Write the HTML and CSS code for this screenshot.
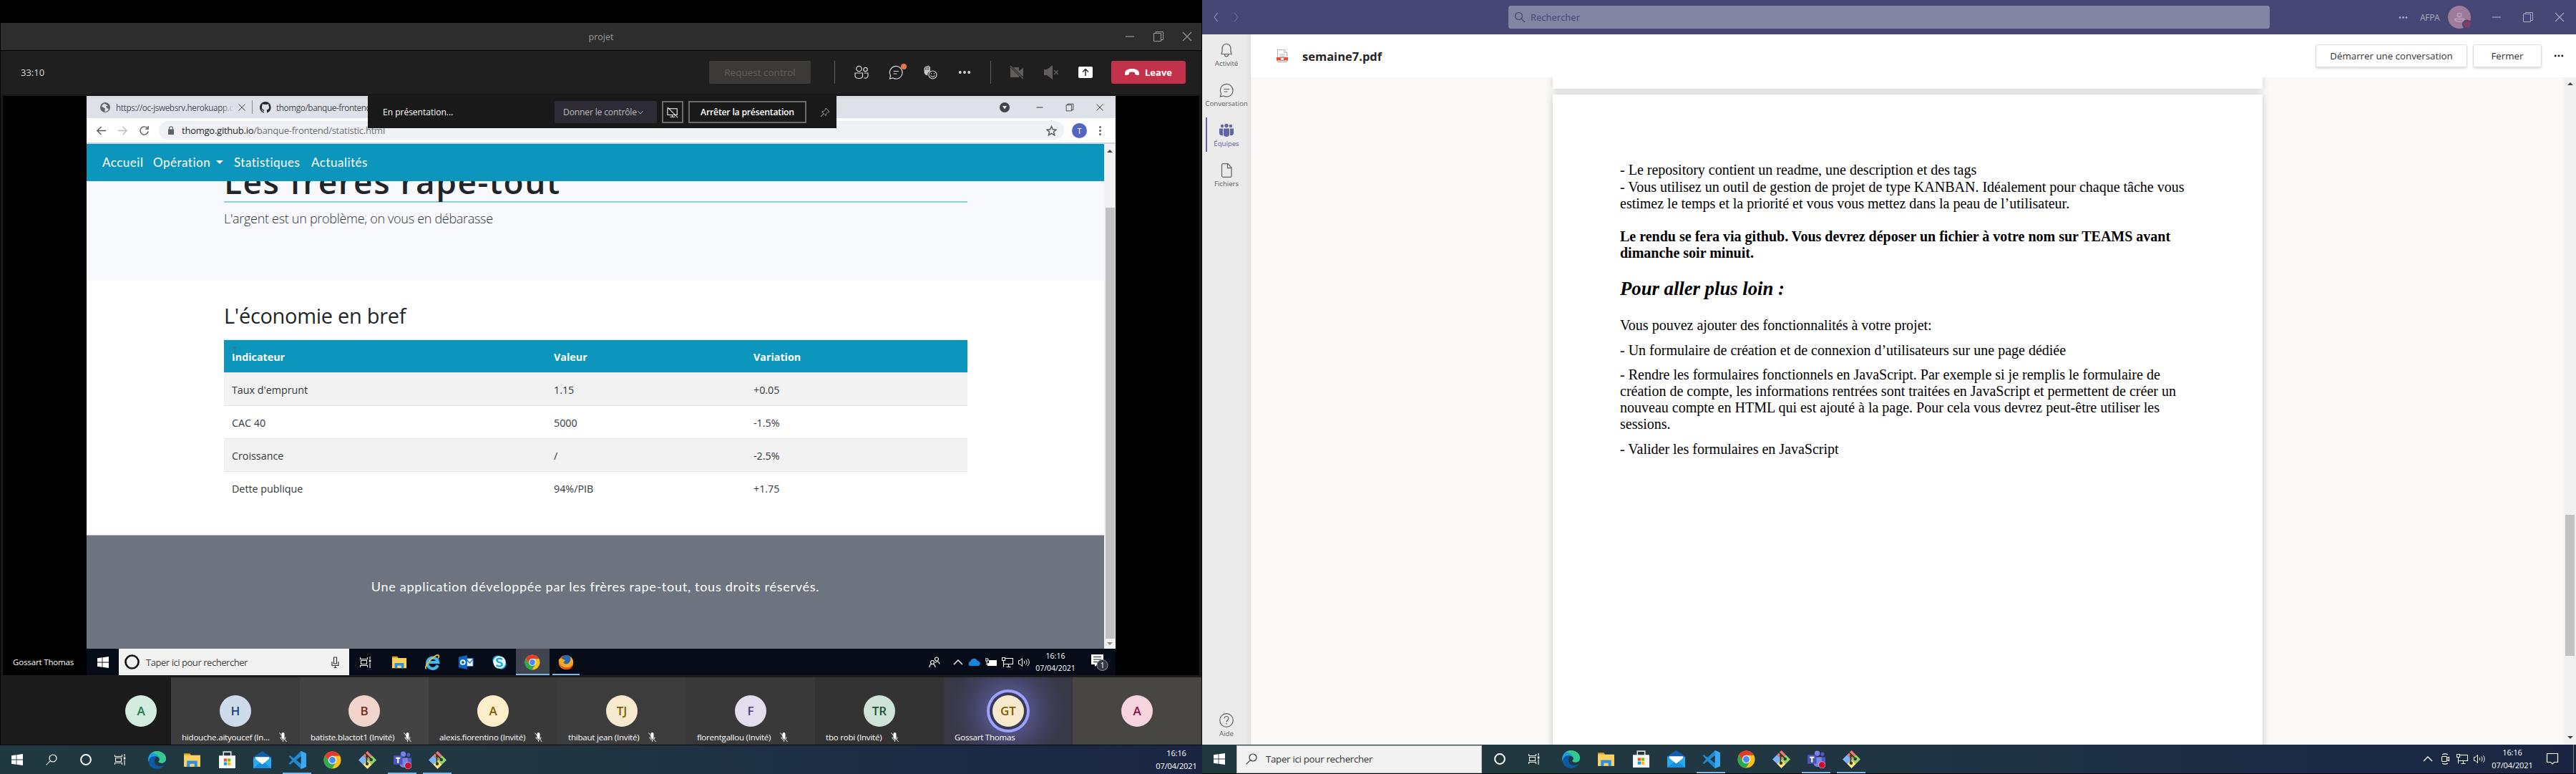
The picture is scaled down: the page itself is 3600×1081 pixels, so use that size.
FILE: index.html
```html
<!DOCTYPE html>
<html lang="fr">
<head>
<meta charset="utf-8">
<title>projet</title>
<link rel="stylesheet" href="styles.css">
</head>
<body>
<svg class="defs" xmlns="http://www.w3.org/2000/svg">
  <symbol id="win" viewBox="0 0 16 16"><path fill="#fff" d="M0 2.2 6.6 1.3V7.6H0zM7.4 1.2 16 0v7.6H7.4zM0 8.4h6.6v6.3L0 13.8zM7.4 8.4H16V16l-8.6-1.2z"/></symbol>
  <symbol id="search" viewBox="0 0 16 16"><g fill="none" stroke="currentColor" stroke-width="1.2"><circle cx="10" cy="6" r="5"/><path d="M6.4 9.6.6 15.4"/></g></symbol>
  <symbol id="searchr" viewBox="0 0 16 16"><g fill="none" stroke="currentColor" stroke-width="1.2"><circle cx="6.5" cy="6.5" r="5"/><path d="m10 10 5 5"/></g></symbol>
  <symbol id="ring" viewBox="0 0 16 16"><circle cx="8" cy="8" r="6.9" fill="none" stroke="currentColor" stroke-width="2"/></symbol>
  <symbol id="tview" viewBox="0 0 16 16"><g fill="none" stroke="#fff" stroke-width="1.1"><path d="M.5 1v2.5h10V1M.5 15v-2.500h10V15M1.500 5.500h8v5h-8zM14 0v3.500M14 8.500V16"/></g><path fill="#fff" d="M12.800 4.500h2.500v3h-2.500z"/></symbol>
  <symbol id="edge" viewBox="0 0 24 24"><path fill="#0c59a4" d="M1 13c1-5 6-7 10-5-3 2-4 10 3 12 4 1 7-1 8-2-2 4-6 6-10 6C5 24 0 19 1 13z"/><path fill="#1b9de2" d="M0 12C0 5 5 0 12 0c7 0 12 5 12 10 0 4-3 6-6 6-2 0-5-1-4-2 3-3 0-7-5-7-5 0-8 3-8 8C.5 14 0 13 0 12z"/><path fill="#35c98b" d="M5 2.500C7 .8 9 0 12 0c7 0 12 5 12 10 0 4-3 6-6 6-2 0-5-1-4-2 2-1.500 2-4 .5-6C13 5 9 3 5 2.500z"/></symbol>
  <symbol id="folder" viewBox="0 0 24 24"><path fill="#e8a317" d="M1 3h8l2 3H1z"/><path fill="#fcd263" d="M1 5.500h22V21H1z"/><path fill="#2f8fe0" d="M5 13h14v8h-4v-4H9v4H5z"/></symbol>
  <symbol id="store" viewBox="0 0 24 24"><path fill="none" stroke="#d8dcdf" stroke-width="1.600" d="M7 7V1h10v6"/><path fill="#f7f7f7" d="M1 6h22v17H1z"/><path fill="#f04f22" d="M7.500 10h4v4h-4z"/><path fill="#7fba00" d="M12.500 10h4v4h-4z"/><path fill="#00a4ef" d="M7.500 15h4v4h-4z"/><path fill="#ffb900" d="M12.500 15h4v4h-4z"/></symbol>
  <symbol id="mail" viewBox="0 0 24 24"><path fill="#0f5fb0" d="M0 8 12 0l12 8v5H0z"/><path fill="#fff" d="M2.500 8h19v6L12 18l-9.500-4z"/><path fill="#29a9ee" d="m0 8 12 10L24 8v15H0z"/><path fill="#1590e0" d="m0 23 9-7.500 3 2.500 3-2.500L24 23z"/></symbol>
  <symbol id="vsc" viewBox="0 0 24 24"><path fill="#1f8ad2" d="M17 0 24 3v18l-7 3L7 14.500l-4.500 3.500L.5 17l4.500-5L.5 7l2-1L7 9.500zM17.500 6.500 10.500 12l7 5.500z"/><path fill="#3aa9f2" d="m17 0 7 3v18l-7 3z"/></symbol>
  <symbol id="chrome" viewBox="0 0 24 24"><circle cx="12" cy="12" r="11.500" fill="#fbc116"/><path fill="#e33b2e" d="M2 6.200A11.500 11.500 0 0 1 22 6.500H12L6.500 13z"/><path fill="#2da94f" d="M2 6.200A11.500 11.500 0 0 0 11.500 23.500L16.500 15 12 17l-5-3z"/><circle cx="12" cy="12" r="5.500" fill="#fff"/><circle cx="12" cy="12" r="4.300" fill="#4a8af4"/></symbol>
  <symbol id="git" viewBox="0 0 24 24"><path fill="#f07575" d="m12 0 6 6-6 6-6-6z"/><path fill="#80b3ff" d="m6 6 6 6-6 6-6-6z"/><path fill="#8fd870" d="m18 6 6 6-6 6-6-6z"/><path fill="#ffe680" d="m12 12 6 6-6 6-6-6z"/><g stroke="#32401f" fill="#32401f" stroke-width="1.600"><path d="M11 5v12M9 3l8 8"/><circle cx="11.500" cy="17" r="1.400"/><circle cx="17" cy="11.500" r="1.400"/><circle cx="11.500" cy="7" r="1"/></g></symbol>
  <symbol id="teams" viewBox="0 0 24 24"><circle cx="13" cy="4" r="3.500" fill="#7b83eb"/><circle cx="20" cy="5" r="2.500" fill="#5059c9"/><path fill="#5059c9" d="M15 9h9v7c0 4-5 5-7 3z"/><path fill="#7b83eb" d="M8 9h11v8c0 6-9 7-11 1z"/><path fill="#4b53bc" d="M0 6h12v12H0z"/><path fill="#fff" d="M3 8.500h6v1.700H7V16H5v-5.800H3z"/><circle cx="19.500" cy="19.500" r="4.500" fill="#c50f2e" stroke="#f3d6dc" stroke-width=".6"/></symbol>
  <symbol id="min" viewBox="0 0 16 16"><path d="M2 8h12" stroke="currentColor" stroke-width="1.200"/></symbol>
  <symbol id="rest" viewBox="0 0 16 16"><path fill="none" stroke="currentColor" d="M1.500 3.500h10v11h-10zM4 3.500v-2h10.500v11h-3"/></symbol>
  <symbol id="x" viewBox="0 0 16 16"><path stroke="currentColor" stroke-width="1.100" d="m2 2 12 12M14 2 2 14"/></symbol>
  <symbol id="dots" viewBox="0 0 16 16"><g fill="currentColor"><circle cx="2.500" cy="8" r="1.700"/><circle cx="8" cy="8" r="1.700"/><circle cx="13.500" cy="8" r="1.700"/></g></symbol>
  <symbol id="chat" viewBox="0 0 20 20"><g fill="none" stroke="currentColor" stroke-width="1.200"><path d="M1.500 19 2.500 14.500A8.800 8.800 0 1 1 6 18z"/><path d="M6.500 8.500h7.500M6.500 12h5"/></g></symbol>
  <symbol id="mic" viewBox="0 0 12 14"><path fill="#fff" d="M4 2a2 2 0 0 1 4 0v5a2 2 0 0 1-4 0z"/><path fill="none" stroke="#fff" d="M2.500 6.500c0 5 7 5 7 0M6 10.500V13M1 .500 11 13"/></symbol>
  <symbol id="net" viewBox="0 0 16 16"><path fill="none" stroke="#fff" stroke-width="1.100" d="M5 2.500h10.500v8H3M9.500 10.500v4M6.500 14.500h6M.500 1.500h4v4h-4zM2.500 5.500v9"/></symbol>
  <symbol id="vol" viewBox="0 0 16 16"><path fill="none" stroke="#fff" d="M.500 5.500h2l3-3v11l-3-3h-2zM8 6c1 1 1 3 0 4M10.500 4.500c2 2 2 5 0 7M13 3c3 3 3 7 0 10"/></symbol>
  <symbol id="up" viewBox="0 0 16 16"><path fill="none" stroke="#fff" stroke-width="1.400" d="m2 11 6-6 6 6"/></symbol>
</svg>
<div class="desktop">
<section class="screen left">
  <div class="titlebar"><span></span><span class="wtitle">projet</span><span class="wctl"><svg><use href="#min"/></svg><svg><use href="#rest"/></svg><svg><use href="#x"/></svg></span></div>
  <div class="callbar">
    <span class="timer">33:10</span>
    <span class="reqctl">Request control</span>
    <i class="sep s1"></i>
    <span class="cell"><svg viewBox="0 0 20 20"><g fill="none" stroke="currentColor" stroke-width="1.200"><circle cx="6.500" cy="5" r="3.700"/><circle cx="15.500" cy="6" r="2.700"/><path d="M1 11h10.500v4.500c0 4-10.500 4-10.500 0zM13.500 11H19v4c0 2.500-3 4-5.500 2.500"/></g></svg></span>
    <span class="cell badge"><svg><use href="#chat"/></svg></span>
    <span class="cell"><svg viewBox="0 0 20 20"><path fill="#c8c6c4" d="M1.500 9V4.500L3 2l5-1.500L10 3v5.500c-3 1-4 3-3.500 6C3 14 1.500 12 1.500 9z"/><path stroke="#1f1f1f" stroke-width=".7" d="M3.700 2.500V7M5.800 1.500V7M7.900 1.500V7"/><g fill="#1f1f1f" stroke="currentColor" stroke-width="1.200"><circle cx="13.500" cy="13.500" r="5.500"/><path d="M10.500 14.500c1.500 2.500 4.500 2.500 6 0M11.500 11v1.500M15.500 11v1.500"/></g></svg></span>
    <span class="cell"><svg class="dotsvg"><use href="#dots"/></svg></span>
    <i class="sep s2"></i>
    <span class="cell dim"><svg viewBox="0 0 20 20"><path fill="currentColor" d="M1 3h12v5l6-4v12l-6-4v5H1z"/><path stroke="#1f1f1f" stroke-width="3" d="m1 1 18 18"/><path stroke="currentColor" stroke-width="1.200" d="m1 1 18 18"/></svg></span>
    <span class="cell dim"><svg viewBox="0 0 20 20"><path fill="currentColor" d="M0 6h4l8-6v20l-8-6H0z"/><path stroke="currentColor" stroke-width="1.500" d="m14 7 6 6m0-6-6 6"/></svg></span>
    <span class="cell"><svg viewBox="0 0 20 20"><rect y="2" width="20" height="16" rx="2" fill="#fff"/><path fill="none" stroke="#1f1f1f" stroke-width="1.400" d="M10 15V5.500M6 9.500l4-4 4 4"/></svg></span>
    <span class="leave"><svg viewBox="0 0 20 10"><path fill="#fff" d="M0 7C0 2 4 0 10 0s10 2 10 7c0 2-.5 2-2 2l-3-.8c-1-.2-1-1-1-3-2-1-6-1-8 0 0 2 0 2.800-1 3L2 9C.5 9 0 9 0 7z"/></svg>Leave</span>
  </div>
  <div class="stage">
    <div class="who">Gossart Thomas</div>
    <div class="shared">
      <div class="tabs">
        <svg class="globe" viewBox="0 0 14 14"><circle cx="7" cy="7" r="7" fill="#5f6368"/><path fill="#dee1e8" d="M6 1.500c-2 1-3 2-4 4l3 2 2 1-1 4c3 1 5-1 6-3l-3-2-1-2 3-1z"/></svg>
        <span class="tab1">https://oc-jswebsrv.herokuapp.co</span><svg class="tabx"><use href="#x"/></svg><i></i>
        <svg class="gh" viewBox="0 0 16 16"><path fill="#24292e" d="M8 0C3.600 0 0 3.600 0 8c0 3.500 2.300 6.500 5.500 7.600.4.100.5-.2.500-.400v-1.500c-2.200.500-2.700-1-2.700-1-.4-.9-.9-1.200-.9-1.200-.7-.5.1-.5.1-.5.800.1 1.200.8 1.200.8.700 1.300 1.900.9 2.300.7.100-.5.300-.9.500-1.100-1.800-.2-3.600-.9-3.600-4 0-.9.300-1.600.8-2.100-.1-.2-.4-1 .1-2.100 0 0 .7-.2 2.200.8a7.600 7.600 0 0 1 4 0c1.500-1 2.200-.8 2.200-.8.400 1.100.2 1.900.1 2.100.5.600.8 1.300.8 2.100 0 3.100-1.900 3.700-3.700 3.900.3.300.6.800.6 1.500v2.200c0 .2.100.5.500.4A8 8 0 0 0 8 0z"/></svg>
        <span class="tab2">thomgo/banque-frontend</span>
        <span class="bctl"><svg class="dd" viewBox="0 0 14 14"><circle cx="7" cy="7" r="7" fill="#41444a"/><path fill="#fff" d="M4 5h6l-3 4.500z"/></svg><svg><use href="#min"/></svg><svg><use href="#rest"/></svg><svg><use href="#x"/></svg></span>
      </div>
      <div class="address">
        <svg viewBox="0 0 16 16"><path d="M15 8H2m6-6L2 8l6 6"/></svg><svg class="off" viewBox="0 0 16 16"><path d="M1 8h13M8 2l6 6-6 6"/></svg><svg viewBox="0 0 16 16"><path d="M13 4.500A6 6 0 1 0 14 9M14 1v4.500H9.500"/></svg>
        <div class="url"><svg viewBox="0 0 10 12"><path fill="#5f6368" stroke="none" d="M1 4.500h8V12H1z"/><path stroke="#5f6368" fill="none" stroke-width="1.300" d="M2.700 5V2.800c0-2.700 4.600-2.700 4.600 0V5"/></svg><b>thomgo.github.io</b><span>/banque-frontend/statistic.html</span><svg class="star" viewBox="0 0 16 16"><path d="m8 1.500 2 4.700 5 .4-3.800 3.200 1.200 5L8 12.100l-4.400 2.700 1.200-5L1 6.600l5-.4z"/></svg></div>
        <span class="acct">T</span><span class="kebab"><i></i><i></i><i></i></span>
      </div>
      <div class="page">
        <div class="site">
          <nav><a class="n1">Accueil</a><a class="n2">Opération</a><i></i><a class="n3">Statistiques</a><a class="n4">Actualités</a></nav>
          <header><div class="hero"><h1>Les frères rape-tout</h1></div><p>L'argent est un problème, on vous en débarasse</p></header>
          <main><h2>L'économie en bref</h2>
          <table><tr><th>Indicateur<svg class="ibeam" viewBox="0 0 6 14"><path fill="none" stroke="#5b6a70" d="M.5.5h5M3 .5v13"/></svg></th><th>Valeur</th><th>Variation</th></tr>
          <tr class="odd"><td>Taux d'emprunt</td><td>1.15</td><td>+0.05</td></tr>
          <tr><td>CAC 40</td><td>5000</td><td>-1.5%</td></tr>
          <tr class="odd"><td>Croissance</td><td>/</td><td>-2.5%</td></tr>
          <tr><td>Dette publique</td><td>94%/PIB</td><td>+1.75</td></tr></table></main>
          <footer><span>Une application développée par les frères rape-tout, tous droits réservés.</span></footer>
        </div>
        <div class="sbar"><i class="au"></i><b></b><i class="ad"></i></div>
      </div>
      <div class="rtask">
        <span class="rwin"><svg><use href="#win"/></svg></span>
        <div class="rsearch"><svg class="rr"><use href="#ring"/></svg><span>Taper ici pour rechercher</span><svg class="rmic" viewBox="0 0 12 16"><path fill="none" stroke="#333" stroke-width="1.200" d="M4 1h4v9H4zM1.500 7v5.500h9V7M6 12.500V16M4 15.500h4"/></svg></div>
        <span class="rc"><svg class="s16"><use href="#tview"/></svg></span><span class="rc"><svg><use href="#folder"/></svg></span>
        <span class="rc"><svg viewBox="0 0 24 24"><path fill="none" stroke="#45b8f2" stroke-width="4.500" d="M20.500 16.500A8.300 8.300 0 1 1 21 12H7"/><path fill="none" stroke="#f7c52c" stroke-width="1.800" d="M3 22C-3 19 19-4 22 2c.5 1 0 2.500-1 4"/></svg></span>
        <span class="rc"><svg viewBox="0 0 24 24"><path fill="#fff" stroke="#0f6fd0" d="M12 6h11v12H12z"/><path fill="none" stroke="#0f6fd0" stroke-width="1.500" d="m13 8 5 5 5-6"/><path fill="#0b65c4" d="m1 4 13-3v22L1 20z"/><circle cx="7.500" cy="12" r="3.200" fill="none" stroke="#fff" stroke-width="2"/></svg></span>
        <span class="rc"><svg viewBox="0 0 24 24"><circle cx="9" cy="9" r="7.500" fill="#13a9ec"/><circle cx="15" cy="15" r="7.500" fill="#13a9ec"/><circle cx="12" cy="12" r="9.500" fill="#e9f8ff"/><path fill="none" stroke="#12a5ea" stroke-width="2.500" d="M16 8c-2-3-8-2-8 1 0 4 8 2 8 6 0 4-7 4-8.500 1"/></svg></span>
        <span class="rc hot"><svg><use href="#chrome"/></svg></span>
        <span class="rc warm"><svg viewBox="0 0 24 24"><circle cx="12" cy="12" r="11" fill="#ef6b19"/><circle cx="13" cy="9" r="8" fill="#2169b4"/><path fill="#f7a928" d="M1 8c2-3 4-2 6-1l4 2-3 3c2 4 7 3 9 0 3-3 2-7 1-9 4 3 5 6 5 9-1 9-9 12-15 10C2 20 0 14 1 8z"/><path fill="#e4501a" d="M1 9c1 7 5 11 12 11 4 0 8-2 10-6 0 13-22 13-22-5z"/></svg></span>
        <div class="rtray"><svg viewBox="0 0 16 16"><g fill="none" stroke="#fff" stroke-width="1.200"><circle cx="11" cy="3.500" r="2.500"/><circle cx="5" cy="8" r="2.500"/><path d="M1 15c0-6 8-6 8 0M9 8.500c3-3 6-1 6 2"/></g></svg><svg class="c2"><use href="#up"/></svg><svg viewBox="0 0 16 12"><path fill="#1785e0" d="M2 11a3 3 0 0 1 0-6c1-5 8-6 10-1 4 0 5 5 2 7z"/></svg><svg viewBox="0 0 16 16"><path fill="#fff" d="M5 5h11v8H3V9h2z"/><path stroke="#fff" fill="none" d="M0 3h4v3H0zM2 6v6"/></svg><svg><use href="#net"/></svg><svg><use href="#vol"/></svg></div>
        <div class="rclock">16:16<br>07/04/2021</div>
        <svg class="rnote" viewBox="0 0 24 24"><path fill="#fff" d="M0 1h17v14H9l-4 3v-3H0z"/><path stroke="#222" d="M3 4.500h11M3 8h11M3 11.500h7"/><circle cx="15.500" cy="16" r="7.500" fill="#343942" stroke="#8c9097"/><text x="12.500" y="20" fill="#fff" font-size="11">1</text></svg>
      </div>
    </div>
  </div>
  <div class="people">
    <div class="p me"><span class="av g">A</span></div>
    <div class="p t1"><span class="av b">H</span><label>hidouche.aityoucef (In...<svg><use href="#mic"/></svg></label></div>
    <div class="p t2"><span class="av r">B</span><label>batiste.blactot1 (Invité)<svg><use href="#mic"/></svg></label></div>
    <div class="p t3"><span class="av y">A</span><label>alexis.fiorentino (Invité)<svg><use href="#mic"/></svg></label></div>
    <div class="p t4"><span class="av y2">TJ</span><label>thibaut jean (Invité)<svg><use href="#mic"/></svg></label></div>
    <div class="p t3"><span class="av v">F</span><label>florentgallou (Invité)<svg><use href="#mic"/></svg></label></div>
    <div class="p t5"><span class="av g2">TR</span><label>tbo robi (Invité)<svg><use href="#mic"/></svg></label></div>
    <div class="p speak"><span class="av y2">GT</span><label>Gossart Thomas</label></div>
    <div class="p t6"><span class="av pk">A</span></div>
  </div>
  <div class="taskbar">
    <span class="k"><svg class="s16"><use href="#win"/></svg></span><span class="k"><svg class="s16"><use href="#search"/></svg></span><span class="k"><svg class="s16"><use href="#ring"/></svg></span><span class="k tv"><svg class="s16"><use href="#tview"/></svg></span>
    <span class="a"><svg><use href="#edge"/></svg></span><span class="a"><svg><use href="#folder"/></svg></span><span class="a"><svg><use href="#store"/></svg></span><span class="a"><svg><use href="#mail"/></svg></span><span class="a on"><svg><use href="#vsc"/></svg></span><span class="a"><svg><use href="#chrome"/></svg></span><span class="a"><svg><use href="#git"/></svg></span><span class="a on"><svg><use href="#teams"/></svg></span><span class="a on"><svg><use href="#git"/></svg></span>
    <div class="clock">16:16<br>07/04/2021</div>
  </div>
</section>
<section class="screen right">
  <div class="thead">
    <svg class="nv" viewBox="0 0 8 14"><path fill="none" stroke="currentColor" d="M6.500 1 2 7l4.500 6"/></svg><svg class="nv nv2" viewBox="0 0 8 14"><path fill="none" stroke="currentColor" d="M1.500 1 6 7l-4.500 6"/></svg>
    <div class="tsearch"><svg><use href="#searchr"/></svg>Rechercher</div>
    <div class="tuser"><svg class="td"><use href="#dots"/></svg><span>AFPA</span>
    <svg class="tav" viewBox="0 0 32 32"><circle cx="16" cy="16" r="16" fill="#9c7c98"/><g fill="none" stroke="#bba5bd" stroke-width="1.300"><circle cx="16" cy="13" r="2.700"/><path d="M9.500 18.500h13c0 5-13 5-13 0z"/></g><circle cx="26.500" cy="26" r="6.500" fill="#464775"/><circle cx="27" cy="26" r="5" fill="#843c68"/></svg></div>
    <div class="tctl"><svg><use href="#min"/></svg><svg><use href="#rest"/></svg><svg><use href="#x"/></svg></div>
  </div>
  <div class="tbody">
    <aside>
      <div class="it"><svg viewBox="0 0 20 20"><path fill="none" stroke="currentColor" stroke-width="1.200" d="M3 15.500c0-1.500 1-2 1-4V8c0-9 12-9 12 0v3.500c0 2 1 2.500 1 4zM7.500 16c0 4 5 4 5 0"/></svg>Activité</div>
      <div class="it"><svg><use href="#chat"/></svg>Conversation</div>
      <div class="it act"><svg viewBox="0 0 20 20"><g fill="currentColor"><circle cx="10" cy="3.500" r="2.700"/><circle cx="4" cy="4" r="2.200"/><circle cx="16" cy="4" r="2.200"/><path d="M6 7.500h8V16c0 4-8 4-8 0zM0 7.500h5V17c-3 1-5-1-5-3zM20 7.500h-5V17c3 1 5-1 5-3z"/></g></svg>Équipes</div>
      <div class="it"><svg viewBox="0 0 20 20"><path fill="none" stroke="currentColor" stroke-width="1.200" d="M5 .6h7l5 5.400v11.500c0 1-.5 1.900-1.500 1.900h-10c-1 0-2-.9-2-1.900v-15C3.500 1.500 4 .6 5 .6zM11.500.6v6H17"/></svg>Fichiers</div>
      <div class="it help"><svg viewBox="0 0 20 20"><g fill="none" stroke="currentColor" stroke-width="1.200"><circle cx="10" cy="10" r="9.300"/><path d="M7 7.500c0-4 6-4 6 0 0 2-3 2.500-3 5M10 14v1.500"/></g></svg>Aide</div>
    </aside>
    <div class="file">
      <div class="fhead"><svg class="pdf" viewBox="0 0 16 18"><path fill="#fff" stroke="#b5b5b5" d="M1.500.5h9l4 4v13h-13z"/><path fill="none" stroke="#b5b5b5" d="M10.500.5v4h4M4 7h8M4 9.500h8"/><path fill="#e0563b" d="M0 11h16v4.500H0z"/><path fill="#fff" stroke="#c33" stroke-width=".7" d="M5.500 11.500h5v3.500h-5z"/></svg><strong>semaine7.pdf</strong><span class="btn b1">Démarrer une conversation</span><span class="btn b2">Fermer</span><svg class="fd"><use href="#dots"/></svg></div>
      <div class="viewer">
        <div class="canvas">
          <div class="sheet s0"></div>
          <article class="sheet">
            <p class="l l1">- Le repository contient un readme, une description et des tags</p>
            <p class="l">- Vous utilisez un outil de gestion de projet de type KANBAN. Idéalement pour chaque tâche vous<br>estimez le temps et la priorité et vous vous mettez dans la peau de l’utilisateur.</p>
            <p class="l bold">Le rendu se fera via github. Vous devrez déposer un fichier à votre nom sur TEAMS avant<br>dimanche soir minuit.</p>
            <h3>Pour aller plus loin :</h3>
            <p class="l q">Vous pouvez ajouter des fonctionnalités à votre projet:</p>
            <p class="l q">- Un formulaire de création et de connexion d’utilisateurs sur une page dédiée</p>
            <p class="l q">- Rendre les formulaires fonctionnels en JavaScript. Par exemple si je remplis le formulaire de<br>création de compte, les informations rentrées sont traitées en JavaScript et permettent de créer un<br>nouveau compte en HTML qui est ajouté à la page. Pour cela vous devrez peut-être utiliser les<br>sessions.</p>
            <p class="l q">- Valider les formulaires en JavaScript</p>
          </article>
        </div>
        <div class="vbar"><i class="au"></i><b></b><i class="ad"></i></div>
      </div>
    </div>
  </div>
  <div class="taskbar">
    <span class="k"><svg class="s16"><use href="#win"/></svg></span>
    <div class="lsearch"><svg class="s16"><use href="#search"/></svg>Taper ici pour rechercher</div>
    <span class="k"><svg class="s16"><use href="#ring"/></svg></span><span class="k tv"><svg class="s16"><use href="#tview"/></svg></span>
    <span class="a"><svg><use href="#edge"/></svg></span><span class="a"><svg><use href="#folder"/></svg></span><span class="a"><svg><use href="#store"/></svg></span><span class="a"><svg><use href="#mail"/></svg></span><span class="a on"><svg><use href="#vsc"/></svg></span><span class="a"><svg><use href="#chrome"/></svg></span><span class="a"><svg><use href="#git"/></svg></span><span class="a on"><svg><use href="#teams"/></svg></span><span class="a on"><svg><use href="#git"/></svg></span>
    <div class="ltray"><svg class="c2"><use href="#up"/></svg><svg viewBox="0 0 16 16"><g fill="none" stroke="#fff" stroke-width="1.100"><rect x="3.500" y="4.500" width="7" height="7" rx="1"/><path d="m10.500 7 3-1.500v5l-3-1.500M4 2c2-1.500 6-1.500 8 0M4 14c2 1.500 6 1.500 8 0"/></g></svg><svg><use href="#net"/></svg><svg><use href="#vol"/></svg></div>
    <div class="clock">16:16<br>07/04/2021</div>
    <svg class="note" viewBox="0 0 18 18"><path fill="none" stroke="#fff" stroke-width="1.200" d="M1.500 1.500h15v12h-5L9 16l-2.500-2.500h-5z"/></svg><i class="peek"></i>
  </div>
</section>
<div class="present"><span class="pt">En présentation...</span><span class="give">Donner le contrôle<svg viewBox="0 0 8 6"><path fill="none" stroke="#aaa" d="m.5 1 3.500 4 3.500-4"/></svg></span><span class="noscr"><svg viewBox="0 0 18 18"><path fill="none" stroke="#fff" stroke-width="1.200" d="M1 3h15v10H1zM1 1l16 16M5 16h8M8.500 13v3"/></svg></span><span class="stop">Arrêter la présentation</span><svg class="pin" viewBox="0 0 14 14"><path fill="none" stroke="#999" d="m8 1 5 5-2 .5-2.500 2.500L8 11.500 2.500 6 5 5.500 7.500 3zM5 9l-4 4"/></svg></div>
</div>
</body>
</html>
```
FILE: styles.css
```css
*{box-sizing:border-box}
body{margin:0;background:#000;font-family:"Open Sans","Noto Sans",sans-serif;overflow:hidden}
svg{display:block;flex:none;width:16px;height:16px}
.defs{position:absolute;width:0;height:0}
p,h1,h2,h3{margin:0}
.desktop{display:flex;width:3600px;height:1081px;position:relative}
.screen{display:flex;flex-direction:column;height:1081px}
.left{width:1680px;padding-top:32px}
.right{width:1920px}

.titlebar{margin:0 1px;height:38px;background:#2d2d2d;display:grid;grid-template-columns:1fr auto 1fr;align-items:center;color:#9a9a9a;font-size:12.500px}
.wctl{justify-self:end;display:flex;gap:24px;padding-right:12px}
.callbar{margin:1px 1px 0;height:63px;background:#1f1f1f;border-bottom:3px solid #191919;display:flex;align-items:center;color:#d8d8d8}
.timer{font-size:13px;width:962px;padding-left:28px}
.reqctl{width:142px;height:32px;margin-left:28px;background:#3b3a39;border-radius:2px;color:#615f5e;font-size:13.500px;line-height:32px;text-align:center}
.sep{width:1px;height:32px;background:#605e5c}
.s1{margin:0 13px 0 33px}.s2{margin:0 12px}
.cell{width:48px;display:flex;justify-content:center;position:relative}
.cell svg{width:20px;height:20px}
.cell .dotsvg{width:18px}
.badge::after{content:"";position:absolute;left:31px;top:-2px;width:8px;height:8px;border-radius:50%;background:#e97548}
.dim{color:#605e5c}
.leave{margin-left:12px;width:104px;height:32px;background:#c4314b;border-radius:3px;display:flex;align-items:center;justify-content:center;gap:8px;color:#fff;font-size:13px;font-weight:700}
.leave svg{width:20px;height:10px}

.stage{margin-left:1px;height:812px;width:1678px;background:#000;border:solid #1b1b1b;border-width:0 3px 3px;display:flex}
.who{width:117px;padding:782px 0 0 14px;color:#fff;font-size:11.500px;letter-spacing:-.15px;line-height:18px;white-space:nowrap}
.shared{width:1438px;height:809px;display:flex;flex-direction:column;background:#fff}
.tabs{height:31px;background:linear-gradient(#d5d8df,#dee1e8 6px);display:flex;align-items:center;font-size:11.800px;letter-spacing:-.42px;color:#4a4d52}
.globe{width:14px;height:14px;margin-left:19px}
.tab1{width:164px;margin-left:8px;overflow:hidden;white-space:nowrap;-webkit-mask-image:linear-gradient(90deg,#000 90%,transparent)}
.tabx{width:12px;height:12px;margin-left:6px;color:#333}
.tabs>i{width:1px;height:19px;background:#85888d;margin:0 10px 0 8px}
.gh{width:16px;height:16px}
.tab2{margin-left:7px;width:145px;white-space:nowrap;overflow:hidden}
.bctl{margin-left:auto;display:flex;align-items:center;color:#222;padding-right:16px}
.bctl svg{width:12px;height:12px;margin-left:30px}
.bctl .dd{width:14px;height:14px;margin:0 6px 0 0}
.address{height:36px;border-bottom:2px solid #cfd6df;background:#fff;display:flex;align-items:center;padding-left:13px}
.address svg{width:15px;height:15px;margin-right:15px;fill:none;stroke:#54575c;stroke-width:1.500}
.address .off{stroke:#b9bbbf}
.url{width:1265px;height:26px;margin-left:-2px;border-radius:13px;background:#f0f1f5;display:flex;align-items:center;padding:0 10px 0 12px;font-size:13px;letter-spacing:-.24px;color:#6c6f74}
.url b{font-weight:400;color:#25272a}
.url svg{width:10px;height:12px;margin-right:10px}
.url .star{width:15px;height:15px;margin:0 0 0 auto}
.acct{width:21px;height:21px;border-radius:50%;background:#5366c2;color:#fff;font-size:11px;line-height:21px;text-align:center;margin-left:11px}
.kebab{margin-left:17px;display:flex;flex-direction:column;gap:2px}
.kebab i{width:3px;height:3px;border-radius:50%;background:#5f6368}
.page{display:flex;height:705px}
.site{width:1422px;display:flex;flex-direction:column}
nav{height:52px;background:#0d96bd;color:#fff;font:17px Lato,sans-serif;letter-spacing:.5px;display:flex;align-items:center;padding:0 0 2px 22px}
nav a{white-space:nowrap}
.n1{width:71px}.n2{width:88px}.n3{width:108px}
nav i{border:5px solid transparent;border-top-color:#fff;border-bottom:0;margin-right:15px}
header{height:139px;background:#f8f9fd;padding:0 191px 0 192px;overflow:hidden}
.hero{display:flow-root;height:30px;border-bottom:2px solid #8bcfe2}
h1{font:600 46px/58px "Open Sans",sans-serif;letter-spacing:1.550px;color:#212529;margin-top:-29px;white-space:nowrap}
header p{font-size:18px;letter-spacing:-.3px;font-weight:300;line-height:28px;color:#333;margin-top:8px}
main{padding:31px 191px 0 192px;height:355px}
h2{font:500 29px/36px "Open Sans",sans-serif;letter-spacing:-.3px;color:#212529;margin-bottom:15px}
table{width:1039px;border-collapse:collapse;font-size:14.300px;color:#33373b;table-layout:fixed}
th,td{height:46px;padding:2px 0 0 11px;text-align:left;border-top:1px solid #e3e5e8}
th:nth-child(1){width:450px}th:nth-child(2){width:279px}
th{background:#0d96bd;color:#fff;position:relative}
.ibeam{position:absolute;left:12px;top:10px;width:6px;height:14px}
.odd{background:#f2f2f2}
footer{height:159px;background:#6d737f;border-top:1px solid #b9bcc2;color:#fff;font:18px Lato,sans-serif;letter-spacing:.73px;display:flex;justify-content:center;padding-top:60px}
.sbar,.vbar{display:flex;flex-direction:column;align-items:center;background:#f1f1f3}
.sbar{width:16px}
.sbar b{width:13px;height:602px;background:#c1c1c1;margin-top:77px}
.au{border:4px solid transparent;border-bottom-color:#444;border-top:0;margin-top:8px}
.ad{border:4px solid transparent;border-top-color:#8a8a8a;border-bottom:0;margin-top:5px}
.rtask{height:37px;background:#050c18;display:flex;align-items:center;color:#fff}
.rwin{width:45px;padding-left:15px}
.rsearch{width:322px;height:37px;background:#f2f2f2;color:#444;display:flex;align-items:center;font-size:13px;letter-spacing:-.45px;padding:0 13px 0 8px}
.rr{width:21px;height:21px;color:#111;margin-right:9px}
.rmic{width:13px;height:16px;margin-left:auto}
.rc{width:46.600px;height:37px;display:flex;align-items:center;justify-content:center}
.rc svg{width:22px;height:22px}
.rc .s16,.s16{width:16px;height:16px}
.hot{background:#3f444e;box-shadow:inset 0 -2px #76b9ed}
.warm{background:linear-gradient(#76b9ed,#76b9ed) 50% 100%/38px 2px no-repeat}
.rtray{margin-left:auto;display:flex;align-items:center;gap:7px}
.rtray>svg:first-child{margin-right:10px}
.rtray>svg:nth-child(3){height:12px}
.rclock{width:66px;margin-left:3px;font-size:10.500px;line-height:17px;text-align:center}
.rnote{width:24px;height:24px;margin:0 10px 0 17px}

.people{margin:0 1px;height:94px;display:flex;background:#1b1b1b}
.p{width:180px;height:94px;display:flex;flex-direction:column;align-items:center;padding-top:25px}
.me{width:238px;align-items:flex-end;padding-right:20px}
.av{width:44px;height:44px;border-radius:50%;font-size:17px;font-weight:600;text-align:center;line-height:44px;flex:none}
.p label{align-self:flex-start;padding-left:15px;margin-top:6px;color:#fff;font-size:11.500px;letter-spacing:-.2px;line-height:18px;display:flex;gap:12px;align-items:center;white-space:nowrap}
.p label svg{width:13px;height:14px}
.g{background:#d2ecdf;color:#237b4b}.b{background:#cedbeb;color:#1b4370}.r{background:#f1d5cd;color:#76281b}.y{background:#fdeeca;color:#835c00}.y2{background:#f7e9cd;color:#835c00}.v{background:#e2deed;color:#4c3d7a}.g2{background:#cfe2d7;color:#1d5138}.pk{background:#f5d4e0;color:#8a1445}
.t1{background:#3d3d3d}.t2{background:#434343}.t3{background:#393939}.t4{background:#3c3c3c}.t5{background:#333}.t6{background:#474643}
.speak{background:radial-gradient(circle at 50% 50%,#5a5b94 0,#4f4f7c 34px,#424160 52px,#393847 80px)}
.speak .av{box-shadow:0 0 0 4px #39395a,0 0 0 8px #9ea2ff}

.taskbar{height:41px;background:linear-gradient(90deg,#203840 0,#213741 40%,#1b2a44 82%,#1b2542);display:flex;align-items:center;color:#fff;border-top:1px solid #05080a}
.right .taskbar{border-top:0;border-bottom:1px solid #05080a}
.k{width:48px;height:40px;display:flex;align-items:center;justify-content:center}
.tv{margin-right:2.500px}
.a{width:49px;height:40px;display:flex;align-items:center;justify-content:center}
.a svg{width:25px;height:25px}
.on{background:linear-gradient(#76b9ed,#76b9ed) 50% 100%/40px 2px no-repeat}
.clock{width:62px;font-size:11px;letter-spacing:-.1px;line-height:18px;text-align:center}
.left .clock{margin-left:auto;margin-right:5px}

.thead{height:48px;background:#464775;display:flex;align-items:center;color:#a9a9c4}
.nv{width:8px;height:14px;margin-left:15px}.nv2{margin-left:21px;color:#7a7aa3}
.tsearch{width:1064px;height:32px;margin-left:376px;background:#8383a3;border-radius:3px;color:#464775;font-size:13px;display:flex;align-items:center;gap:7px;padding-left:8px}
.tuser{margin-left:180px;display:flex;align-items:center;font-size:12px}
.td{width:13px;height:13px}
.tuser span{margin:0 12px 0 17px;letter-spacing:-.3px}
.tav{width:32px;height:32px}
.tctl{display:flex;gap:28px;margin-left:28px}
.tbody{display:flex;height:992px}
aside{width:68px;background:linear-gradient(90deg,#ebebeb 60px,#dfdfdf);display:flex;flex-direction:column;padding-top:4px}
.it{height:56px;display:flex;flex-direction:column;align-items:center;padding-top:8px;font-size:9.800px;letter-spacing:-.1px;line-height:18px;color:#616161}
.it svg{width:20px;height:20px}
.act{color:#6264a7;background:linear-gradient(#6264a7,#6264a7) 5px 0/2px 48px no-repeat}
.help{margin-top:auto;margin-bottom:-4px}
.file{width:1852px}
.fhead{height:60px;background:#fff;display:flex;align-items:center;padding-left:36px;color:#252423}
.pdf{width:16px;height:18px}
.fhead strong{font-size:16.500px;margin-left:20px;width:1416px;font-weight:700}
.btn{height:32px;border:1px solid #dcdcdc;border-radius:3px;box-shadow:0 2px 3px #0002;font-size:13.300px;line-height:30px;text-align:center;font-weight:500;color:#333}
.b1{width:212px}.b2{width:96px;margin-left:8px}
.fd{width:14px;height:14px;margin-left:17px}
.viewer{height:932px;display:flex;background:#faf9f8;overflow:hidden}
.canvas{width:1835px;padding-left:422px}
.sheet{width:992px;background:#fff;box-shadow:0 0 10px #0003;height:930px}
.s0{height:16px;margin-bottom:8px}
article{padding:94px 0 0 94px;font-family:"Liberation Serif",serif;color:#000}
.l{font-size:20px;line-height:23px;white-space:nowrap}
.l1{margin-bottom:1px}
.bold{font-weight:700;margin-top:23px}
h3{font:italic 700 26.700px/31px "Liberation Serif",serif;margin:23px 0 24px}
.q{margin-bottom:11.700px}
.vbar{width:17px;height:932px;background:#f0f0f0}
.vbar .au{margin-top:7px}
.vbar b{width:13px;height:197px;background:#c1c1c1;margin-top:600px}
.vbar .ad{margin-top:112px;border-top-color:#444}
.lsearch{width:343px;height:39px;background:#f2f2f2;border:1px solid #bbb;color:#333;font-size:13.300px;letter-spacing:-.3px;display:flex;align-items:center;gap:12px;padding-left:12px;margin-right:1px}
.ltray{margin-left:auto;display:flex;gap:8px;margin-right:7px}
.note{width:18px;height:18px;margin:0 20px 0 16px}
.peek{width:1px;height:40px;background:#777e8e;margin-right:3px}

/* presenter bar floats over the shared window */
.present{position:absolute;left:514px;top:134px;width:655px;height:45px;background:#191919;display:flex;align-items:center;color:#fff;font-size:12px}
.pt{width:261px;padding-left:21px}
.give{width:143px;height:31px;background:#2d2c36;border-radius:2px;color:#bbb;font-size:12.200px;letter-spacing:-.2px;line-height:31px;padding-left:12px;display:flex;align-items:center;gap:1px;white-space:nowrap}
.give svg{width:8px;height:6px}
.noscr{width:30px;height:31px;border:2px solid #6b6b6b;margin-left:7px;display:flex;align-items:center;justify-content:center}
.stop{width:165px;height:31px;border:2px solid #6b6b6b;margin-left:7px;text-align:center;font-size:12.200px;letter-spacing:-.2px;line-height:27px;font-weight:600;white-space:nowrap}
.pin{width:14px;height:14px;margin-left:19px}
```
